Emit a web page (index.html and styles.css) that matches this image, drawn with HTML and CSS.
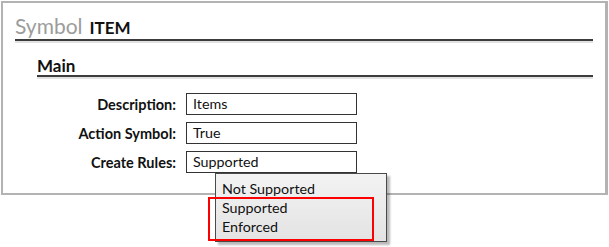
FILE: index.html
```html
<!DOCTYPE html>
<html lang="en">
<head>
    <meta charset="UTF-8">
    <title>Symbol ITEM</title>
    <link rel="stylesheet" href="styles.css">
</head>
<body>
<div class="panel">
    <h1 class="symbol-title"><span class="kind">Symbol</span> <span class="name">ITEM</span></h1>

    <div class="section">
        <h2 class="section-title">Main</h2>

        <div class="form-grid">
            <label class="field-label">Description:</label>
            <div class="field-box">Items</div>

            <label class="field-label">Action Symbol:</label>
            <div class="field-box">True</div>

            <label class="field-label">Create Rules:</label>
            <div class="field-wrap">
                <div class="field-box">Supported</div>
                <ul class="dropdown">
                    <li>Not Supported</li>
                    <li>Supported</li>
                    <li>Enforced</li>
                </ul>
                <div class="highlight"></div>
            </div>
        </div>
    </div>
</div>
</body>
</html>
```

FILE: styles.css
```css
* {
    margin: 0;
    padding: 0;
    box-sizing: border-box;
}

html, body {
    min-height: 100%;
}

body {
    font-family: Lato, "Open Sans", sans-serif;
    color: #111;
    background: #fff;
    min-height: 247px;
}

.panel {
    margin: 1px 1px 0 1px;
    height: 194px;
    border: 2px solid #b3b3b3;
    border-right-width: 3px;
    position: relative;
}

.symbol-title {
    display: flex;
    align-items: baseline;
    gap: 7px;
    margin: 0 12px;
    height: 38px;
    padding-top: 13px;
    border-bottom: 2px solid #3c3c3c;
    box-shadow: 0 2px 0 #e2e2e2;
    line-height: 20px;
    white-space: nowrap;
}
.symbol-title .kind {
    font-size: 21px;
    color: #9c9c9c;
    font-weight: normal;
}
.symbol-title .name {
    font-size: 17px;
    font-weight: bold;
}

.section {
    margin: 0 12px 0 34px;
}

.section-title {
    padding-top: 15px;
    height: 36px;
    font-size: 17px;
    line-height: 20px;
    border-bottom: 2px solid #3c3c3c;
    box-shadow: 0 2px 0 #e2e2e2;
}

.form-grid {
    display: grid;
    grid-template-columns: 139px 171px;
    column-gap: 10px;
    row-gap: 7px;
    margin-top: 16px;
    align-items: center;
}

.field-label {
    text-align: right;
    font-weight: bold;
    font-size: 14.5px;
    white-space: nowrap;
}

.field-box {
    height: 22px;
    border: 1px solid #333;
    padding-left: 6px;
    font-size: 14.3px;
    line-height: 20px;
    background: #fff;
}

.field-wrap {
    position: relative;
}

.dropdown {
    position: absolute;
    left: 29px;
    top: 22px;
    width: 172px;
    height: 69px;
    list-style: none;
    border: 1px solid #4a4a4a;
    background: linear-gradient(#f3f3f3, #e3e3e3);
    box-shadow: 3px 3px 2px rgba(0, 0, 0, 0.28);
    padding: 5px 0 0 6px;
    font-size: 14.3px;
    line-height: 19px;
    z-index: 2;
}

.highlight {
    position: absolute;
    left: 22px;
    top: 46px;
    width: 166px;
    height: 44px;
    border: 2px solid #f00;
    z-index: 3;
}
```
